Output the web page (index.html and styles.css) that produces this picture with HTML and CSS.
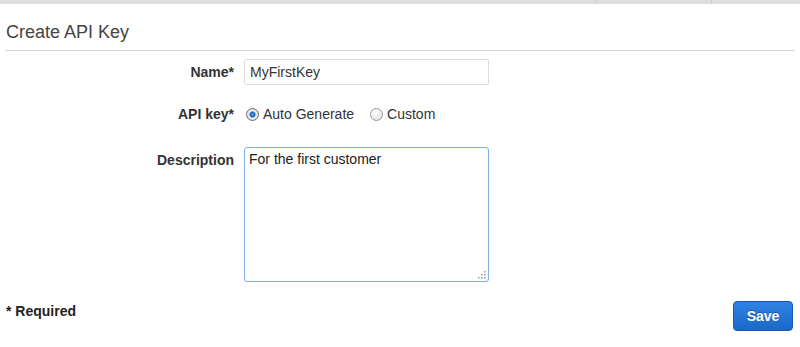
FILE: index.html
```html
<!DOCTYPE html>
<html lang="en">

<head>
    <meta charset="UTF-8">
    <meta name="viewport" content="width=device-width, initial-scale=1.0">
    <title>Create API Key</title>
    <link rel="stylesheet" href="styles.css">
</head>

<body>
    <div class="topbar">
        <div class="seg seg-main"></div>
        <div class="seg seg-mid"></div>
        <div class="seg seg-end"></div>
    </div>

    <h1 class="title">Create API Key</h1>

    <form class="form" action="#">
        <label class="lbl" for="name">Name*</label>
        <div class="field">
            <input type="text" id="name" class="txt" value="MyFirstKey">
        </div>

        <span class="lbl lbl-radio">API key*</span>
        <div class="field radios">
            <label class="opt"><input type="radio" name="kind" checked><span>Auto Generate</span></label>
            <label class="opt"><input type="radio" name="kind"><span>Custom</span></label>
        </div>

        <label class="lbl lbl-top" for="desc">Description</label>
        <div class="field area-wrap">
            <textarea id="desc" class="area">For the first customer</textarea>
            <svg class="grip" width="8" height="8" viewBox="0 0 8 8">
                <rect x="6" y="0" width="1.5" height="1.5" fill="#999" />
                <rect x="3" y="3" width="1.5" height="1.5" fill="#999" />
                <rect x="6" y="3" width="1.5" height="1.5" fill="#999" />
                <rect x="0" y="6" width="1.5" height="1.5" fill="#999" />
                <rect x="3" y="6" width="1.5" height="1.5" fill="#999" />
                <rect x="6" y="6" width="1.5" height="1.5" fill="#999" />
            </svg>
        </div>
    </form>

    <div class="footer">
        <span class="req">* Required</span>
        <button type="button" class="btn">Save</button>
    </div>
</body>

</html>
```

FILE: styles.css
```css
* {
    margin: 0;
    padding: 0;
    box-sizing: border-box;
}

body {
    font-family: "Liberation Sans", Arial, sans-serif;
    font-size: 14px;
    color: #333;
    background: #fff;
}

.topbar {
    display: flex;
    height: 4px;
    background: #dedede;
}

.topbar .seg-main {
    width: 596px;
}

.topbar .seg-mid {
    width: 115px;
    border-left: 1px solid #cfcfcf;
}

.topbar .seg-end {
    flex: 1;
    border-left: 1px solid #cfcfcf;
}

.title {
    font-size: 18px;
    font-weight: normal;
    line-height: 22px;
    color: #444;
    margin: 17px 5px 0;
    padding: 0 0 7px 1px;
    border-bottom: 1px solid #d6d6d6;
}

.form {
    display: grid;
    grid-template-columns: 234px 245px;
    column-gap: 10px;
    row-gap: 19px;
    margin-top: 8px;
}

.lbl {
    font-weight: bold;
    text-align: right;
    align-self: center;
}

.lbl-top {
    align-self: start;
    margin-top: 4px;
    padding-top: 5px;
}

.txt {
    width: 245px;
    height: 26px;
    border: 1px solid #ddd;
    border-radius: 2px;
    padding: 0 5px;
    font: 14px "Liberation Sans", Arial, sans-serif;
    color: #333;
}

.radios {
    display: flex;
    align-items: center;
    height: 20px;
}

.opt {
    display: flex;
    align-items: center;
    margin-right: 14px;
}

.opt input {
    appearance: none;
    width: 13px;
    height: 13px;
    margin: 0 4px 0 2px;
    border: 1px solid #9a9a9a;
    border-radius: 50%;
    background: radial-gradient(circle at 40% 35%, #fff 0, #e6e6e6 70%, #d0d0d0 100%);
}

.opt input:checked {
    background: radial-gradient(circle, #5aa4ee 0, #1a5fb4 2.5px, #eaeaea 3.5px, #d8d8d8 100%);
    border-color: #6c6c6c;
}

.area-wrap {
    position: relative;
    width: 245px;
    height: 135px;
    margin-top: 4px;
}

.area {
    width: 245px;
    height: 135px;
    border: 1px solid #7eb0e8;
    border-radius: 3px;
    padding: 3px 4px;
    font: 14px "Liberation Sans", Arial, sans-serif;
    color: #222;
    resize: none;
    outline: none;
}

.grip {
    position: absolute;
    right: 3px;
    bottom: 3px;
}

.footer {
    display: flex;
    justify-content: space-between;
    align-items: flex-start;
    margin-top: 19px;
    padding: 0 7px 0 6px;
}

.req {
    font-weight: bold;
    color: #222;
    padding-top: 2px;
}

.btn {
    width: 60px;
    height: 30px;
    border: 1px solid #1658b4;
    border-radius: 4px;
    background: linear-gradient(#2f83e2, #1b67cc);
    color: #fff;
    font: bold 14px "Liberation Sans", Arial, sans-serif;
    text-shadow: 0 -1px 0 rgba(0, 0, 0, 0.25);
}
```
